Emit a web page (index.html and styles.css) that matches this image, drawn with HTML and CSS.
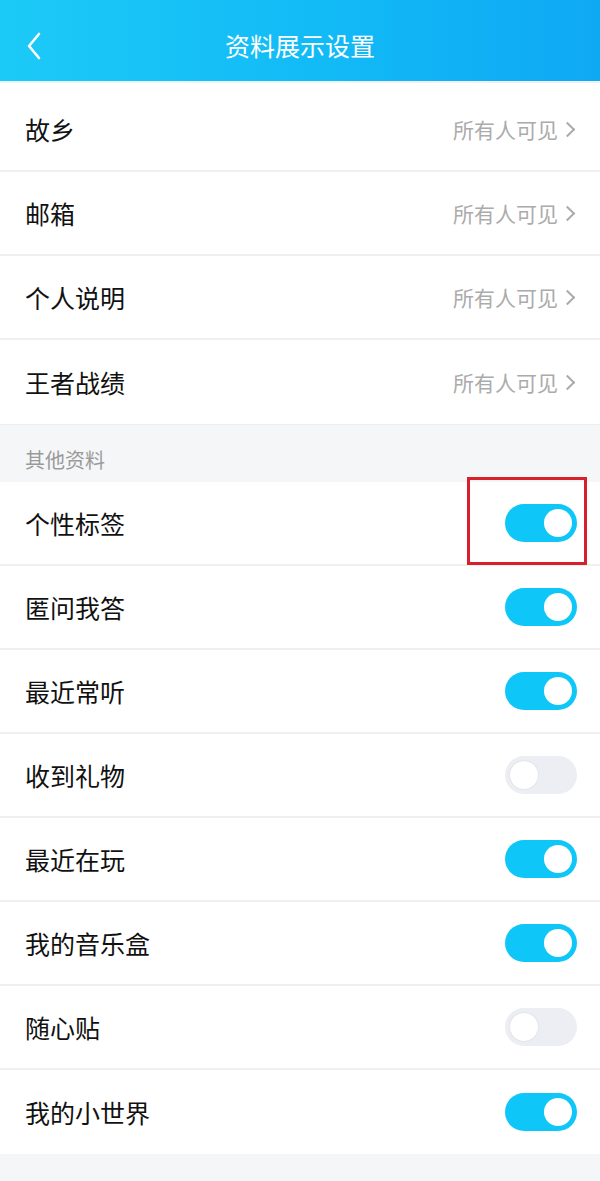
FILE: index.html
```html
<!DOCTYPE html>
<html lang="zh-CN">

<head>
    <meta charset="UTF-8">
    <meta name="viewport" content="width=device-width, initial-scale=1.0">
    <title>资料展示设置</title>

    <link rel="stylesheet" href="styles.css">
</head>

<body>

    <div class="header">
        <a href="javascript:;" class="back">
            <svg width="16" height="28" viewBox="0 0 16 28">
                <path d="M13 2 L3 14 L13 26" fill="none" stroke="#fff" stroke-width="2.6" stroke-linecap="round" stroke-linejoin="round" />
            </svg>
        </a>
        <h1>资料展示设置</h1>
    </div>

    <div class="group">
        <div class="row">
            <span class="label">故乡</span>
            <span class="value">所有人可见<i class="arrow"></i></span>
        </div>
        <div class="row">
            <span class="label">邮箱</span>
            <span class="value">所有人可见<i class="arrow"></i></span>
        </div>
        <div class="row">
            <span class="label">个人说明</span>
            <span class="value">所有人可见<i class="arrow"></i></span>
        </div>
        <div class="row">
            <span class="label">王者战绩</span>
            <span class="value">所有人可见<i class="arrow"></i></span>
        </div>
    </div>

    <div class="group-title">其他资料</div>

    <div class="group">
        <div class="row marked">
            <span class="label">个性标签</span>
            <span class="switch on"></span>
            <span class="mark"></span>
        </div>
        <div class="row">
            <span class="label">匿问我答</span>
            <span class="switch on"></span>
        </div>
        <div class="row">
            <span class="label">最近常听</span>
            <span class="switch on"></span>
        </div>
        <div class="row">
            <span class="label">收到礼物</span>
            <span class="switch"></span>
        </div>
        <div class="row">
            <span class="label">最近在玩</span>
            <span class="switch on"></span>
        </div>
        <div class="row">
            <span class="label">我的音乐盒</span>
            <span class="switch on"></span>
        </div>
        <div class="row">
            <span class="label">随心贴</span>
            <span class="switch"></span>
        </div>
        <div class="row">
            <span class="label">我的小世界</span>
            <span class="switch on"></span>
        </div>
    </div>

    <script>
        // 点击切换开关
        var switches = document.querySelectorAll('.switch');
        for (var i = 0; i < switches.length; i++) {
            switches[i].addEventListener('click', function () {
                this.classList.toggle('on');
            });
        }
    </script>
</body>

</html>
```

FILE: styles.css
```css
* {
    margin: 0;
    padding: 0;
    box-sizing: border-box;
}

body {
    background-color: #f5f6f8;
    font-family: "Noto Sans CJK SC", "Noto Sans", sans-serif;
    color: #111;
}

.header {
    display: flex;
    align-items: center;
    justify-content: center;
    position: relative;
    height: 83px;
    background: linear-gradient(90deg, #1ccaf7 0%, #12baf6 55%, #0fa8f4 100%);
    border-bottom: 2px solid #eef0f2;
}

.header h1 {
    font-size: 25px;
    font-weight: normal;
    color: #fff;
    letter-spacing: 0;
    margin-top: 8px;
}

.back {
    position: absolute;
    left: 26px;
    top: 32px;
    display: block;
    width: 16px;
    height: 28px;
}

.group {
    background-color: #fff;
    padding-top: 5px;
}

.group + .group-title + .group {
    padding-top: 0;
}

.row {
    display: flex;
    align-items: center;
    justify-content: space-between;
    height: 84px;
    padding: 0 24px 0 25px;
    border-bottom: 2px solid #f0f0f0;
}

.group .row:last-child {
    border-bottom: 0;
}

.label {
    font-size: 25px;
    line-height: 1;
}

.value {
    display: flex;
    align-items: center;
    font-size: 21px;
    color: #ababab;
    margin-right: 3px;
}

.arrow {
    display: inline-block;
    width: 11px;
    height: 11px;
    margin-left: 4px;
    border-top: 2px solid #ababab;
    border-right: 2px solid #ababab;
    transform: rotate(45deg);
}

.group-title {
    height: 58px;
    padding: 25px 25px 0;
    font-size: 20px;
    color: #9a9a9a;
    line-height: 1;
    border-top: 1px solid #eceef0;
}

.switch {
    position: relative;
    width: 72px;
    height: 38px;
    border-radius: 19px;
    background-color: #eceef4;
    margin-right: -1px;
    cursor: pointer;
}

.switch::after {
    content: "";
    position: absolute;
    top: 5px;
    left: 5px;
    width: 28px;
    height: 28px;
    border-radius: 50%;
    background-color: #fff;
    box-shadow: 0 0 2px rgba(0, 0, 0, .12);
}

.switch.on {
    background-color: #0ec6f7;
}

.switch.on::after {
    left: 39px;
    box-shadow: none;
}

.marked {
    position: relative;
}

.mark {
    position: absolute;
    top: -5px;
    right: 13px;
    width: 120px;
    height: 88px;
    border: 3px solid #d7202c;
}
```
